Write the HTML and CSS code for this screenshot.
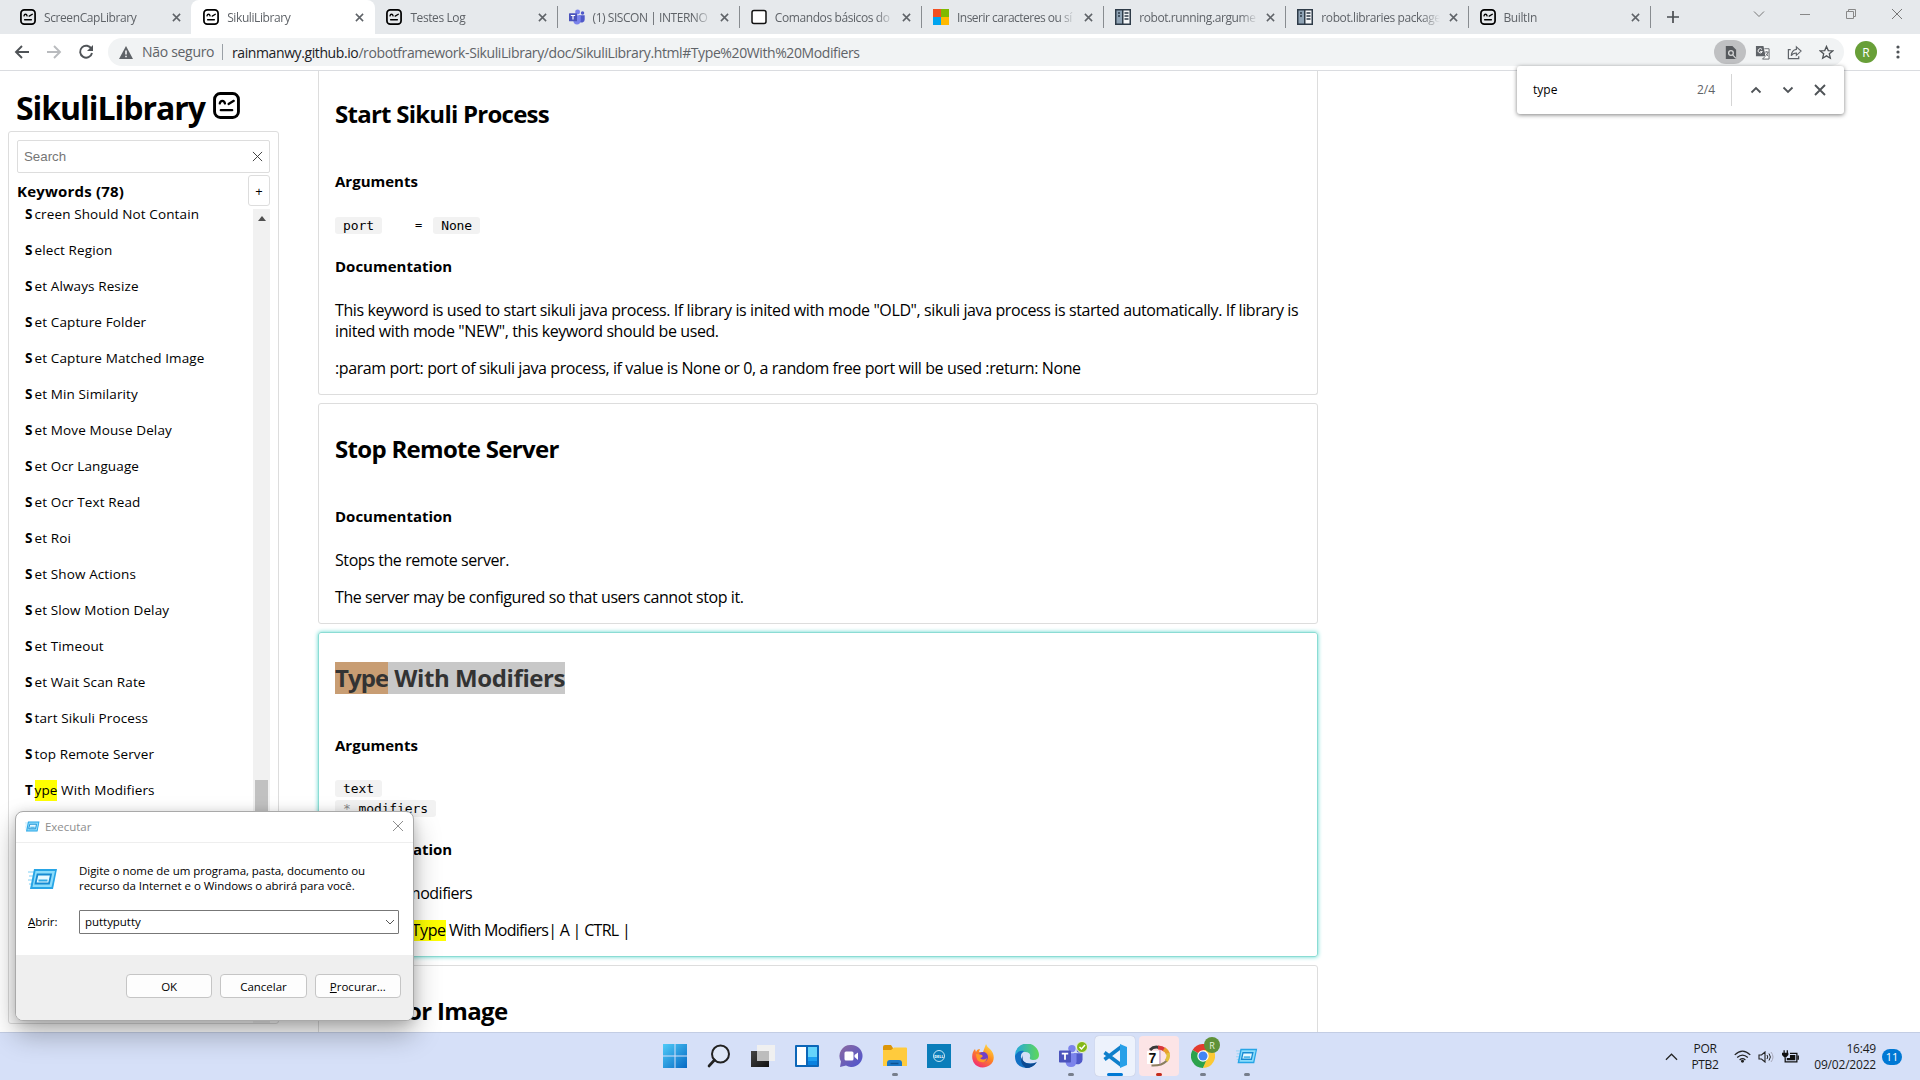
FILE: index.html
```html
<!DOCTYPE html>
<html lang="pt-BR">
<head>
<meta charset="utf-8">
<title>SikuliLibrary</title>
<link rel="stylesheet" href="styles.css">
</head>
<body>
<svg class="defs" width="0" height="0" aria-hidden="true">
  <symbol id="robot" viewBox="0 0 26 26"><rect x="1.500" y="1.500" width="23" height="23" rx="5.500" fill="none" stroke="currentColor" stroke-width="2.800"/><path d="M6.500 11q.5-2.500 2.500-2.500T11.500 11M15 11.500l5-3M7.500 17.500h11" fill="none" stroke="currentColor" stroke-width="2.200" stroke-linecap="round"/></symbol>
  <symbol id="x" viewBox="0 0 10 10"><path d="M1 1l8 8M9 1L1 9" stroke="currentColor" stroke-width="1.700"/></symbol>
  <symbol id="xthin" viewBox="0 0 12 12"><path d="M1 1l10 10M11 1L1 11" stroke="currentColor" stroke-width="1"/></symbol>
  <symbol id="teams" viewBox="0 0 26 26"><circle cx="14" cy="5" r="4" fill="#7b83eb"/><circle cx="22" cy="6.500" r="2.800" fill="#5059c9"/><path d="M16 10h9.500v7a5 5 0 0 1-8 4z" fill="#5059c9"/><path d="M7 10h12v9q-.5 6-6 6t-6-6z" fill="#7b83eb"/><rect y="7" width="13" height="13" rx="1" fill="#4b53bc"/><path d="M3 10.500h7M6.500 10.500V17" stroke="#fff" stroke-width="1.900"/></symbol>
  <symbol id="docs" viewBox="0 0 16 16"><path d="M0 0h16v16H0z" fill="#2e3b48"/><path d="M1.500 1.500H7v13H1.500z" fill="#8fa3b5"/><path d="M8.500 1.500h6v13h-6z" fill="#f4f6f8"/><path d="M3 4h2M3 7h2M9.500 4h4M9.500 7h4M9.500 10h4" stroke="#2e3b48" stroke-width="1.500"/></symbol>
  <symbol id="run" viewBox="0 0 30 22"><path d="M0 4h6M1 8h5M0 12h5M1 16h4" stroke="#7ed0f5" stroke-width="1"/><path d="M6 1h23l-4 20H2z" fill="#27a5e6"/><path d="M7.500 3H27l-3.500 16H4.500z" fill="#8bdcfb"/><path d="M9.500 6.500h13.500l-2 9H7.500z" fill="#e7f9ff" stroke="#178bd2" stroke-width="1.800"/><path d="M10.500 12.500h9" stroke="#31aae5" stroke-width="2"/></symbol>
</svg>
<div class="screen">
  <header class="tabs">
    <div class="tab"><svg class="fav"><use href="#robot"/></svg><span>ScreenCapLibrary</span><svg class="close"><use href="#x"/></svg></div>
    <div class="tab active"><svg class="fav"><use href="#robot"/></svg><span>SikuliLibrary</span><svg class="close"><use href="#x"/></svg></div>
    <div class="tab sep"><svg class="fav"><use href="#robot"/></svg><span>Testes Log</span><svg class="close"><use href="#x"/></svg></div>
    <div class="tab sep"><svg class="fav"><use href="#teams"/></svg><span class="siscon">(1) SISCON | INTERNO</span><svg class="close"><use href="#x"/></svg></div>
    <div class="tab sep"><svg class="fav" viewBox="0 0 16 16"><rect x="1" y="1.500" width="14" height="13" rx="2" fill="#fff" stroke="#111" stroke-width="1.500"/></svg><span>Comandos básicos do</span><svg class="close"><use href="#x"/></svg></div>
    <div class="tab sep"><svg class="fav" viewBox="0 0 16 16"><path d="M0 0h8v8H0z" fill="#f25022"/><path d="M8 0h8v8H8z" fill="#7fba00"/><path d="M0 8h8v8H0z" fill="#00a4ef"/><path d="M8 8h8v8H8z" fill="#ffb900"/></svg><span class="inserir">Inserir caracteres ou sí</span><svg class="close"><use href="#x"/></svg></div>
    <div class="tab sep"><svg class="fav"><use href="#docs"/></svg><span>robot.running.argume</span><svg class="close"><use href="#x"/></svg></div>
    <div class="tab sep"><svg class="fav"><use href="#docs"/></svg><span>robot.libraries package</span><svg class="close"><use href="#x"/></svg></div>
    <div class="tab sep"><svg class="fav"><use href="#robot"/></svg><span>BuiltIn</span><svg class="close"><use href="#x"/></svg></div>
    <svg class="plus" viewBox="0 0 12 12"><path d="M6 0v12M0 6h12" stroke="#4a4d51" stroke-width="1.700"/></svg>
    <div class="winctl">
      <svg viewBox="0 0 12 12"><path d="M1 3.500l5 5 5-5" fill="none" stroke="#777" stroke-width="1"/></svg>
      <svg viewBox="0 0 12 12"><path d="M1 6.500h10" stroke="#888"/></svg>
      <svg viewBox="0 0 12 12"><path d="M1.500 3.500h7v7h-7zM3.500 3.500v-2h7v7h-2" fill="none" stroke="#888"/></svg>
      <svg viewBox="0 0 12 12"><use href="#xthin"/></svg>
    </div>
  </header>
  <div class="toolbar">
    <div class="nav">
      <svg viewBox="0 0 16 16"><path d="M15 8H2M8 2L2 8l6 6" fill="none" stroke="#4f5357" stroke-width="1.900"/></svg>
      <svg viewBox="0 0 16 16"><path d="M1 8h13M8 2l6 6-6 6" fill="none" stroke="#b9bbbe" stroke-width="1.900"/></svg>
      <svg viewBox="0 0 16 16"><path d="M13.500 5A6 6 0 1 0 14 9" fill="none" stroke="#4f5357" stroke-width="1.900"/><path d="M15 1v6H9z" fill="#4f5357"/></svg>
    </div>
    <div class="omni">
      <svg class="warn" viewBox="0 0 14 13"><path d="M7 0l7 13H0z" fill="#5f6368"/><path d="M7 4.500v4M7 9.700v1.600" stroke="#fff" stroke-width="1.500"/></svg>
      <span class="unsafe">Não seguro</span>
      <span class="url"><b>rainmanwy.github.io</b>/robotframework-SikuliLibrary/doc/SikuliLibrary.html#Type%20With%20Modifiers</span>
      <div class="omni-icons">
        <i class="found"><svg viewBox="0 0 16 16"><path d="M3 1h7l4 4v10H3z" fill="#55585c"/><circle cx="8.500" cy="8.500" r="2.500" fill="none" stroke="#d4d5d6" stroke-width="1.400"/><path d="M10.300 10.500l3.500 3.800" stroke="#d4d5d6" stroke-width="1.300"/></svg></i>
        <i><svg viewBox="0 0 16 16"><path d="M1 1h8l2.500 11H1z" fill="#5f6368"/><path d="M10 4h5v11H8l3-3" fill="#fff" stroke="#5f6368"/><path d="M7.500 4.800a2.300 2.300 0 1 0 .3 2.200H5.500" fill="none" stroke="#fff"/><path d="M10.500 7.500h4M12.500 6.500v1M14 7.500q-.5 2.500-2.500 4M11.500 9l2.500 3" fill="none" stroke="#5f6368" stroke-width=".9"/></svg></i>
        <i><svg viewBox="0 0 16 16"><path d="M4 5H1.500v9.500h11V12" fill="none" stroke="#5f6368" stroke-width="1.300"/><path d="M10 2l5 4.500-5 4.500V8.500q-4 0-5.500 3Q5 5.500 10 4.700z" fill="none" stroke="#5f6368" stroke-width="1.200"/></svg></i>
        <i><svg viewBox="0 0 16 16"><path d="M8 1.500l1.900 4.400 4.700.4-3.600 3.100 1.100 4.700L8 11.600l-4.100 2.500L5 9.400 1.400 6.300l4.700-.4z" fill="none" stroke="#4f5357" stroke-width="1.400"/></svg></i>
      </div>
    </div>
    <span class="avatar">R</span>
    <svg class="dots" viewBox="0 0 4 14"><circle cx="2" cy="2" r="1.600"/><circle cx="2" cy="7" r="1.600"/><circle cx="2" cy="12" r="1.600"/></svg>
  </div>
  <main class="page">
    <aside>
      <h1><span>SikuliLibrary</span><svg><use href="#robot"/></svg></h1>
      <div class="box">
        <div class="search"><span>Search</span><svg><use href="#xthin"/></svg></div>
        <div class="kwhead"><b>Keywords (78)</b><button>+</button></div>
        <div class="kwlist">
          <ul>
            <li><b>S</b>creen Should Not Contain</li><li><b>S</b>elect Region</li><li><b>S</b>et Always Resize</li><li><b>S</b>et Capture Folder</li><li><b>S</b>et Capture Matched Image</li><li><b>S</b>et Min Similarity</li><li><b>S</b>et Move Mouse Delay</li><li><b>S</b>et Ocr Language</li><li><b>S</b>et Ocr Text Read</li><li><b>S</b>et Roi</li><li><b>S</b>et Show Actions</li><li><b>S</b>et Slow Motion Delay</li><li><b>S</b>et Timeout</li><li><b>S</b>et Wait Scan Rate</li><li><b>S</b>tart Sikuli Process</li><li><b>S</b>top Remote Server</li><li><b>T</b><mark>ype</mark> With Modifiers</li>
          </ul>
          <div class="scroll"><svg viewBox="0 0 8 5"><path d="M0 5l4-5 4 5z" fill="#505050"/></svg><i></i></div>
        </div>
      </div>
    </aside>
    <section class="cards">
      <article class="card first">
        <h2>Start Sikuli Process</h2>
        <h4>Arguments</h4>
        <div class="args"><div><code>port</code><em>=</em><code>None</code></div></div>
        <h4>Documentation</h4>
        <p>This keyword is used to start sikuli java process. If library is inited with mode "OLD", sikuli java process is started automatically. If library is<br>inited with mode "NEW", this keyword should be used.</p>
        <p>:param port: port of sikuli java process, if value is None or 0, a random free port will be used :return: None</p>
      </article>
      <article class="card stop">
        <h2>Stop Remote Server</h2>
        <h4>Documentation</h4>
        <p>Stops the remote server.</p>
        <p>The server may be configured so that users cannot stop it.</p>
      </article>
      <article class="card target">
        <h2><span class="cur">Type</span><span class="sel"> With Modifiers</span></h2>
        <h4>Arguments</h4>
        <div class="args"><div><code>text</code></div><div><code><s>*</s> modifiers</code></div></div>
        <h4>Documentation</h4>
        <p class="mods">Type with modifiers</p>
        <p class="example">Example: <mark>Type</mark><span> With Modifiers| A | CTRL |</span></p>
      </article>
      <article class="card last"><h2>Wait For Image</h2></article>
    </section>
  </main>
  <footer class="taskbar">
    <div class="apps">
      <i><svg viewBox="0 0 24 24"><defs><linearGradient id="wg" x2="1" y2="1"><stop stop-color="#50cbf8"/><stop offset="1" stop-color="#0669c4"/></linearGradient></defs><path d="M0 0h11.500v11.500H0zM12.500 0H24v11.500H12.500zM0 12.500h11.500V24H0zM12.500 12.500H24V24H12.500z" fill="url(#wg)"/></svg></i>
      <i><svg viewBox="0 0 24 24"><circle cx="13.500" cy="10" r="8.500" fill="#dfe8f8" stroke="#222" stroke-width="2"/><path d="M7.500 16L2 22" stroke="#222" stroke-width="2.600" stroke-linecap="round"/></svg></i>
      <i><svg viewBox="0 0 24 24"><defs><linearGradient id="tv" x2="1" y2="1"><stop stop-color="#444"/><stop offset="1" stop-color="#111"/></linearGradient></defs><path d="M0 7h18v16H0z" fill="url(#tv)"/><path d="M6 1h18v16H6z" fill="#f0f0f0"/><path d="M6 7h12v10H6z" fill="#bdbdbd"/></svg></i>
      <i><svg viewBox="0 0 24 24"><rect y="1" width="24" height="22" rx="1" fill="#0c66b8"/><path d="M2 3h9v18H2z" fill="#fff"/><path d="M13 3h9v10h-9z" fill="#65d4fb"/><path d="M13 13h9v4h-9z" fill="#1ca0f2"/><path d="M13 17h9v4h-9z" fill="#0a82e0"/></svg></i>
      <i><svg viewBox="0 0 24 24"><defs><linearGradient id="ch" x2="1" y2="1"><stop stop-color="#8d6a9f"/><stop offset="1" stop-color="#4b53d0"/></linearGradient></defs><path d="M12 1a11 11 0 1 1-5 20.500L1 23l1-5.500A11 11 0 0 1 12 1z" fill="url(#ch)"/><rect x="5.500" y="7.500" width="9" height="9" rx="1.500" fill="#fff"/><path d="M15.500 11l3.500-2.500v7.500L15.500 13z" fill="#fff"/></svg></i>
      <i class="on"><svg viewBox="0 0 24 24"><path d="M0 3q0-2 2-2h6l2 3v3H0z" fill="#dc9508"/><path d="M0 6h8l3-2.500h12q1 0 1 1V22H0z" fill="#ffcb3d"/><path d="M4 22v-3q0-3 3-3h9q3 0 3 3v3z" fill="#1b78c8"/><path d="M7.500 19.500h8" stroke="#0b5191" stroke-width="1.500"/></svg></i>
      <i><svg viewBox="0 0 24 24"><path d="M0 0h24v24H0z" fill="#0a7dba"/><circle cx="12" cy="12" r="5.500" fill="none" stroke="#d6f0fa" stroke-width=".9"/><text x="12" y="13.500" font-size="4" text-anchor="middle" fill="#fff" font-weight="700">DELL</text></svg></i>
      <i><svg viewBox="0 0 24 24"><defs><linearGradient id="ff" x1=".8" x2=".2" y2="1"><stop stop-color="#ffe14a"/><stop offset=".45" stop-color="#ff8a1f"/><stop offset="1" stop-color="#f0247a"/></linearGradient></defs><path d="M15 0q1 3 4 5c5 5 5 12 0 16s-13 3-16-2S1 8 4 5l1 3q1-3 4-3l-1 3h4z" fill="url(#ff)"/><circle cx="12" cy="13" r="5" fill="#7140c9"/><path d="M5 10q4 0 6 1 2 2-2 3 3 3 7 0-1 5-6 4t-5-8z" fill="#ff9a25"/></svg></i>
      <i><svg viewBox="0 0 24 24"><defs><linearGradient id="ed" x2="1"><stop stop-color="#24a7df"/><stop offset="1" stop-color="#5fd857"/></linearGradient></defs><path d="M0 12A12 12 0 0 1 24 11q0 5-6 5-4 0-3-3 1-5-5-5-7 0-10 6z" fill="url(#ed)"/><path d="M0 12q3-6 9-5-5 4-2 9 4 5 14 3-4 5-10 5Q0 23 0 12z" fill="#1270c4"/><path d="M8 11q-2 5 3 8 5 2 11-1-4 6-11 6-8-5-3-13z" fill="#0c4a92"/></svg></i>
      <i class="on"><svg><use href="#teams"/></svg><span class="ok"><svg viewBox="0 0 10 10"><path d="M2.500 5l2 2 3.500-4" fill="none" stroke="#fff" stroke-width="1.500"/></svg></span></i>
      <i class="vs"><svg viewBox="0 0 24 24"><path d="M1.500 15.500L18 3M1.500 8.500L18 21" fill="none" stroke="#0f7fcb" stroke-width="3.600"/><path d="M17 0l7 3v18l-7 3z" fill="#28a0e8"/></svg></i>
      <i class="seven"><svg viewBox="0 0 24 24"><path d="M3 6Q7 2 12 3.500" fill="none" stroke="#3a3a3a" stroke-width="3"/><path d="M11 3.500q4 0 7 2.500" fill="none" stroke="#d9373a" stroke-width="4"/><path d="M17 5q3 2 4 5" fill="none" stroke="#e9a02c" stroke-width="4"/><path d="M21 9q1 5-2 8" fill="none" stroke="#e2c23e" stroke-width="3.500"/><path d="M19.500 17q-5 5-15 4.500" fill="none" stroke="#8a7f60" stroke-width="2"/><path d="M0 7h12v13H0z" fill="#fff"/><path d="M13 6v14" stroke="#b48fc0" stroke-width="1"/><text class="num" x="1.500" y="19">7</text></svg></i>
      <i class="on"><svg viewBox="0 0 24 24"><path d="M12 12L1.600 6A12 12 0 0 1 22.400 6z" fill="#e33b2e"/><path d="M12 12L1.600 6A12 12 0 0 0 12 24l5-9z" fill="#2ca24c"/><path d="M12 12h5l-5 12A12 12 0 0 0 22.400 6H12z" fill="#fcc934"/><circle cx="12" cy="12" r="5.700" fill="#fff"/><circle cx="12" cy="12" r="4.500" fill="#4285f4"/></svg><span class="badge">R</span></i>
      <i class="on"><svg class="runicon"><use href="#run"/></svg></i>
    </div>
    <div class="tray">
      <svg class="chev" viewBox="0 0 14 8"><path d="M1 7l6-6 6 6" fill="none" stroke="#222" stroke-width="1.300"/></svg>
      <div class="lang">POR<br>PTB2</div>
      <svg class="wifi" viewBox="0 0 16 12"><path d="M.7 4.500q7.300-7 14.600 0M3 7q5-4.500 10 0M5.300 9.200q2.700-2.300 5.400 0" fill="none" stroke="#222" stroke-width="1.200"/><circle cx="8" cy="10.500" r="1.400" fill="#222"/></svg>
      <svg class="vol" viewBox="0 0 16 12"><path d="M1 4h2.500L7 1v10L3.500 8H1z" fill="none" stroke="#222" stroke-width="1.100"/><path d="M9 4q1.500 2 0 4M11 2.500q2.800 3.500 0 7" fill="none" stroke="#222"/><path d="M13 1q4 5 0 10" fill="none" stroke="#aab"/></svg>
      <svg class="bat" viewBox="0 0 16 12"><path d="M2 0v3M5 0v3" stroke="#111" stroke-width="1.200"/><path d="M0 2.500h6v2L3.800 7H2.200L0 4.500z" fill="#111"/><path d="M7.500 3H14v8H3V7" fill="none" stroke="#111" stroke-width="1.200"/><path d="M7.500 4.500h5v5H4.500V7.500h3z" fill="#111"/><path d="M15.200 5v4" stroke="#111" stroke-width="1.400"/></svg>
      <div class="clock">16:49<br>09/02/2022</div>
      <span class="count">11</span>
    </div>
  </footer>

  <div class="find">
    <span class="q">type</span><span class="n">2/4</span>
    <div class="findbtns">
    <svg viewBox="0 0 12 12"><path d="M1.500 8.500L6 4l4.500 4.500" fill="none" stroke="#4f5357" stroke-width="1.800"/></svg>
    <svg viewBox="0 0 12 12"><path d="M1.500 3.500L6 8l4.500-4.500" fill="none" stroke="#4f5357" stroke-width="1.800"/></svg>
    <svg viewBox="0 0 12 12"><path d="M1 1l10 10M11 1L1 11" stroke="#4f5357" stroke-width="1.900"/></svg>
    </div>
  </div>

  <div class="dialog">
    <div class="dtitle"><svg class="dicon"><use href="#run"/></svg><span>Executar</span><svg class="dx"><use href="#xthin"/></svg></div>
    <div class="dbody">
      <svg class="big"><use href="#run"/></svg>
      <div class="dtext">Digite o nome de um programa, pasta, documento ou<br>recurso da Internet e o Windows o abrirá para você.</div>
      <label><u>A</u>brir:</label>
      <div class="combo"><span>puttyputty</span><svg viewBox="0 0 10 6"><path d="M1 1l4 4 4-4" fill="none" stroke="#555"/></svg></div>
    </div>
    <div class="dfoot"><button>OK</button><button>Cancelar</button><button><span><u>P</u>rocurar...</span></button></div>
  </div>
</div>
</body>
</html>
```
FILE: styles.css
```css
* { box-sizing: border-box; }
body { margin: 0; font-family: "Open Sans", "Noto Sans", sans-serif; color: #000; overflow: hidden; }
svg { display: block; flex: none; }
.defs { position: absolute; }
i, em { font-style: normal; }
button { font: inherit; padding: 0; color: #000; }
.screen { position: relative; width: 1920px; height: 1080px; display: flex; flex-direction: column; background: #fff; overflow: hidden; white-space: nowrap; }

.tabs { height: 34px; flex: none; background: #e6e9ec; display: flex; align-items: center; padding-left: 11px; }
.tab { width: 182.2px; height: 34px; display: flex; align-items: center; padding: 0 12px 0 9px; flex: none; font-size: 12px; color: #5f6368; }
.tab span { margin-left: 8px; width: 119px; overflow: hidden; letter-spacing: -.4px; mask-image: linear-gradient(90deg, #000 85%, transparent); }
.tab .siscon { letter-spacing: -.45px; }
.tab .inserir { letter-spacing: -.5px; }
.tab.active { background: #fff; border-radius: 8px 8px 0 0; margin-left: -2px; width: 184.2px; padding: 0 11px 0 12px; }
.tab.sep { padding: 0 10px 0 11px; border-right: 1px solid transparent; border-image: linear-gradient(transparent 7px, #888c90 7px, #888c90 27px, transparent 27px) 1; }
.fav { width: 16px; height: 16px; color: #000; }
.close { width: 9px; height: 9px; margin-left: auto; }
.plus { width: 12px; height: 12px; margin-left: 16px; }
.winctl { margin-left: auto; display: flex; gap: 34px; padding: 0 17px 6px 0; color: #777; }
.winctl svg { width: 12px; height: 12px; }

.toolbar { height: 37px; flex: none; display: flex; align-items: center; border-bottom: 1px solid #dadce0; padding-left: 14px; }
.nav { display: flex; gap: 16px; width: 94px; }
.nav svg { width: 16px; height: 16px; }
.omni { width: 1736px; height: 28px; border-radius: 14px; background: #f1f3f4; display: flex; align-items: center; padding-left: 11px; font-size: 14px; color: #5f6368; }
.warn { width: 14px; height: 13px; }
.unsafe { margin-left: 9px; width: 81px; border-right: 1px solid #9aa0a6; line-height: 16px; letter-spacing: -.3px; }
.url { margin-left: 9px; letter-spacing: -.4px; }
.url b { font-weight: 400; color: #202124; }
.omni-icons { margin-left: auto; display: flex; align-items: center; padding-right: 2px; }
.omni-icons i { width: 32px; height: 24px; border-radius: 12px; display: grid; place-items: center; }
.omni-icons .found { background: #bfc0c2; }
.omni-icons svg { width: 15px; height: 15px; }
.avatar { width: 22px; height: 22px; border-radius: 50%; background: #689f38; color: #fff; font-size: 12px; display: grid; place-items: center; margin-left: 11px; }
.dots { width: 4px; height: 14px; margin-left: 19px; fill: #4f5357; }

.page { flex: 1; min-height: 0; display: flex; align-items: flex-start; overflow: hidden; }
aside { width: 318px; flex: none; padding-left: 8px; }
h1 { margin: 0; height: 60px; padding: 15px 0 0 8px; display: flex; font-size: 32px; line-height: 44px; letter-spacing: -1.050px; }
h1 svg { width: 27px; height: 27px; margin: 6px 0 0 7px; }
h1 span { width: 190px; }
.box { width: 271px; height: 893px; border: 1px solid #ddd; border-radius: 3px; padding: 8px; display: flex; flex-direction: column; }
.search { height: 33px; flex: none; border: 1px solid #ddd; border-radius: 2px; display: flex; align-items: center; justify-content: space-between; padding: 0 6px; font: 13.300px "Liberation Sans", sans-serif; color: #757575; }
.search svg { width: 11px; height: 11px; color: #333; }
.kwhead { display: flex; justify-content: space-between; align-items: center; height: 35px; flex: none; font-size: 15px; margin-bottom: 1px; letter-spacing: .2px; }
.kwhead button { width: 22px; height: 31px; border: 1px solid #ddd; border-radius: 3px; background: #fff; font-size: 13px; }
.kwlist { display: flex; flex: 1; min-height: 0; justify-content: space-between; margin-bottom: -8px; }
ul { list-style: none; margin: -13px 0 0; padding: 0 0 0 8px; font-size: 13.500px; }
li { height: 36px; line-height: 36px; letter-spacing: .12px; }
li b { display: inline-block; width: 9.500px; }
mark { background: #ff0; color: inherit; display: inline-block; line-height: 21px; }
.scroll { width: 17px; background: #f1f1f1; display: flex; flex-direction: column; align-items: center; padding-top: 7px; }
.scroll svg { width: 8px; height: 5px; }
.scroll i { width: 13px; height: 200px; margin-top: 559px; background: #c1c1c1; }

.cards { width: 1000px; display: flex; flex-direction: column; gap: 8px; }
.card { border: 1px solid #ddd; border-radius: 3px; padding: 0 16px; font-size: 16px; }
.first { height: 324px; border-top: 0; border-radius: 0 0 3px 3px; padding-top: 27px; }
.stop { height: 221px; padding-top: 29px; }
.target { height: 325px; padding-top: 29px; border-color: #8bdcd4; box-shadow: 0 0 4px #5fd8cf; }
.last { height: 100px; padding-top: 29px; }
h2 { margin: 0 0 40px; font-size: 24px; line-height: 32px; letter-spacing: -.750px; }
.stop h2 { letter-spacing: -.7px; }
.target h2 { letter-spacing: -.5px; }
.last h2 { letter-spacing: -.650px; padding-left: 1px; }
h4 { margin: 0; font-size: 15px; line-height: 22px; }
p { margin: 0 0 16px; line-height: 21px; letter-spacing: -.395px; }
h4 + p { margin-top: 23px; }
.stop p { letter-spacing: -.420px; }
.args { margin: 23px 0 20px; }
.args div { height: 20px; display: flex; align-items: center; }
.target .args { margin: 22px 0 20px; }
code { font: 13px/17px "DejaVu Sans Mono", monospace; background: #f2f2f2; border-radius: 3px; padding: 0 8px; letter-spacing: -.1px; }
code s { text-decoration: none; color: #888; }
em { font: 12px "DejaVu Sans Mono", monospace; margin: 0 11px 0 33px; }
.cur, .sel { display: inline-block; white-space: pre; color: #333; }
.cur { background: #c89d73; letter-spacing: -.9px; }
.sel { background: #c8c8c8; letter-spacing: -.4px; }
.mods { letter-spacing: -.5px; }
.example { padding-left: 8px; }
.example span { letter-spacing: -.7px; }

.taskbar { height: 48px; flex: none; background: #d6e0f8; border-top: 1px solid #c3cde4; display: flex; align-items: center; padding-left: 652px; }
.apps { display: flex; height: 47px; gap: 4px; padding-left: 3px; }
.apps i { width: 40px; height: 40px; margin-top: 3px; border-radius: 4px; display: grid; place-items: center; position: relative; }
.apps i > svg { width: 24px; height: 24px; }
.apps i > .runicon { width: 22px; height: 16px; }
.on::after, .vs::after, .seven::after { content: ""; position: absolute; bottom: 0; left: 17px; width: 6px; height: 3px; border-radius: 2px; background: #777e8c; }
.apps .vs { background: #edf2fc; box-shadow: 0 0 1px #aab; }
.vs::after { width: 16px; left: 12px; background: #0078d4; }
.apps .seven { background: #fce4e6; }
.num { font: 700 14px "Liberation Sans", sans-serif; fill: #111; }
.seven::after { background: #c42b1c; }
.ok, .badge { position: absolute; border-radius: 50%; display: grid; place-items: center; }
.ok { width: 12px; height: 12px; right: 3px; top: 5px; background: #84b816; border: 1px solid #edf3dc; }
.ok svg { width: 10px; height: 10px; }
.badge { width: 16px; height: 16px; right: 3px; top: 1px; background: #5f9138; color: #e7f3d8; font-size: 9px; }
.tray { margin-left: auto; display: flex; align-items: center; font-size: 12px; line-height: 16px; color: #1b1b1b; padding-right: 18px; }
.chev { width: 13px; height: 8px; }
.lang { width: 30px; margin-left: 12px; text-align: center; letter-spacing: -.3px; }
.wifi { width: 17px; height: 13px; margin-left: 14px; }
.vol { width: 16px; height: 12px; margin-left: 7px; }
.bat { width: 17px; height: 13px; margin-left: 8px; }
.clock { width: 77px; text-align: right; letter-spacing: -.2px; }
.count { width: 20px; height: 16px; border-radius: 8px; background: #0078d4; color: #fff; font-size: 11px; text-align: center; margin-left: 6px; }

.find { position: absolute; left: 1517px; top: 66px; width: 327px; height: 48px; background: #fff; border-radius: 3px; box-shadow: 0 1px 4px rgba(0,0,0,.5); display: flex; align-items: center; padding: 0 18px 0 16px; font-size: 12px; }
.find .n { margin-left: auto; color: #5f6368; width: 34px; }
.find .q, .find .n { padding-bottom: 1px; }
.findbtns { display: flex; gap: 20px; height: 32px; align-items: center; border-left: 1px solid #d5d5d5; padding-left: 18px; }
.findbtns svg { width: 12px; height: 12px; }

.dialog { position: absolute; left: 15px; top: 811px; width: 399px; height: 210px; border: 1px solid #a9a9a9; border-radius: 8px; background: #fff; overflow: hidden; box-shadow: 0 14px 28px rgba(0,0,0,.28), 0 2px 12px rgba(0,0,0,.16); display: flex; flex-direction: column; font-size: 11.500px; letter-spacing: -.04px; }
.dtitle { height: 31px; flex: none; border-bottom: 1px solid #eee; display: flex; align-items: center; padding: 0 9px 2px 9px; color: #8e8e8e; }
.dicon { width: 15px; height: 11px; margin-right: 5px; }
.dx { width: 12px; height: 12px; margin-left: auto; }
.dbody { height: 112px; display: grid; grid-template-columns: 51px 320px; grid-template-rows: 43px 23px; row-gap: 5px; align-items: center; padding: 19px 0 0 12px; }
.big { width: 30px; height: 22px; margin-top: -9px; }
.dtext { line-height: 15px; align-self: start; margin-top: 1px; }
.combo { height: 24px; border: 1px solid #777; border-radius: 1px; display: flex; align-items: center; justify-content: space-between; padding: 0 3px 0 5px; }
.combo svg { width: 10px; height: 6px; }
.dfoot { flex: 1; background: #efefef; display: flex; gap: 8px; padding: 19px 12px 0 110px; }
.dfoot button { width: 87px; height: 24px; background: #fdfdfd; border: 1px solid #c5c5c5; border-radius: 4px; }
```
